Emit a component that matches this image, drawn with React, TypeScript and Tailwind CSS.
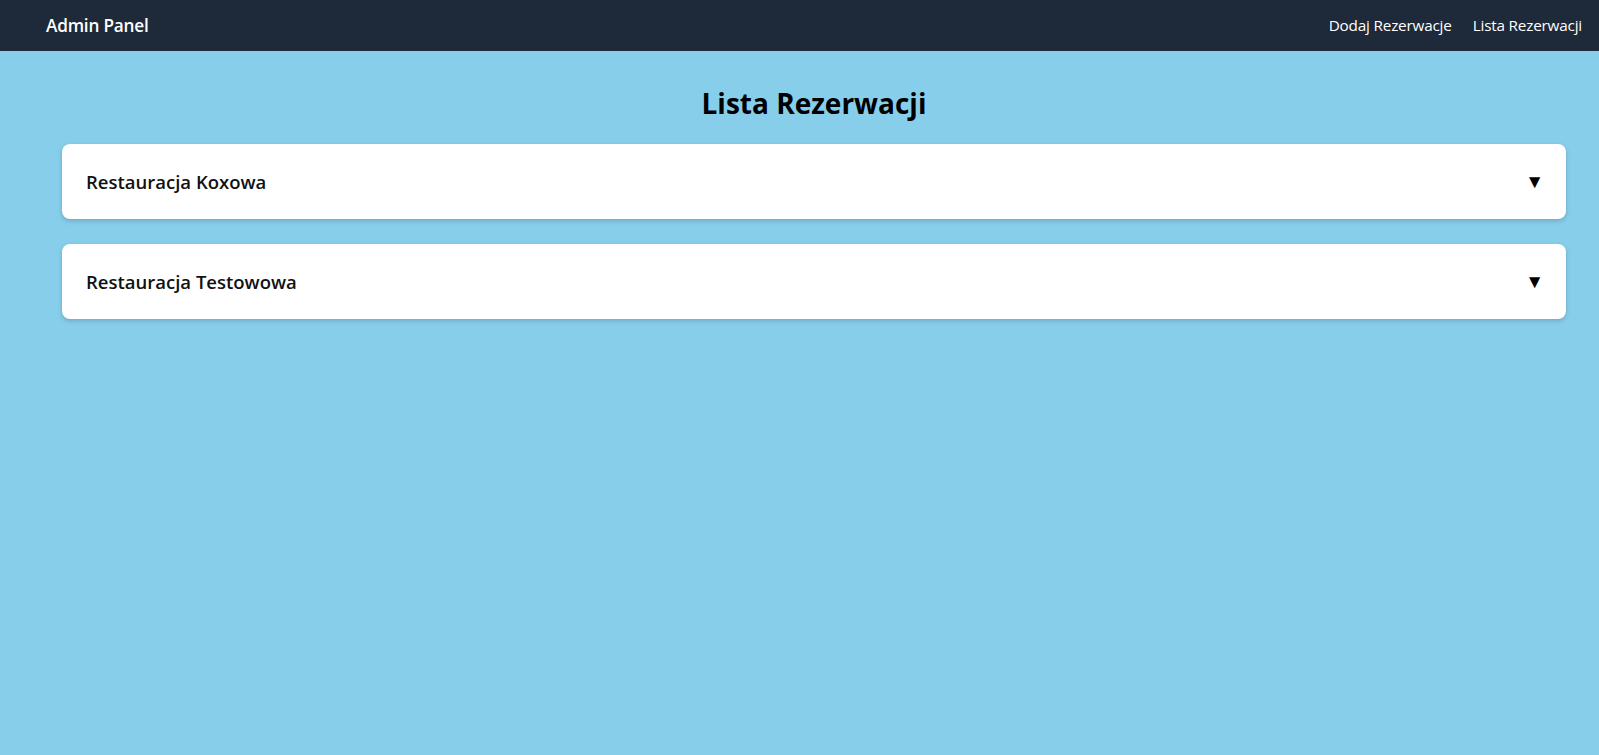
import React, { useState } from 'react';

const restaurants = ['Restauracja Koxowa', 'Restauracja Testowowa'];

function RestaurantCard({ name }: { name: string }) {
    const [open, setOpen] = useState(false);

    return (
        <div className="bg-white rounded-lg shadow-[0_2px_5px_rgba(0,0,0,0.18)] mb-[25px]">
            <button
                onClick={() => setOpen(!open)}
                className="w-full h-[75px] flex items-center justify-between pl-6 pr-[22px] text-left"
            >
                <span className="text-[18.5px] font-semibold text-[#111]">{name}</span>
                <span className="text-[19px] text-black leading-none">▼</span>
            </button>
            {open && (
                <div className="px-6 pb-5 text-sm text-slate-500">Brak rezerwacji</div>
            )}
        </div>
    );
}

export default function App() {
    return (
        <div className="min-h-screen bg-[#87ceeb] font-['Open_Sans',sans-serif]">
            {/* Top bar */}
            <nav className="h-[51px] bg-[#1e2939] flex items-center justify-between pl-[46px] pr-[17px]">
                <span className="text-white font-semibold text-[17.2px] tracking-[-0.2px]">Admin Panel</span>
                <div className="flex items-center gap-[21px] text-white text-[15.3px] tracking-[-0.2px]">
                    <a href="#">Dodaj Rezerwacje</a>
                    <a href="#">Lista Rezerwacji</a>
                </div>
            </nav>

            <main className="pl-[62px] pr-[33px] pt-[34px]">
                <h1 className="text-center text-[28px] font-bold text-black leading-[36px] mb-[23px]">Lista Rezerwacji</h1>
                {restaurants.map(r => (
                    <RestaurantCard key={r} name={r} />
                ))}
            </main>
        </div>
    );
}
